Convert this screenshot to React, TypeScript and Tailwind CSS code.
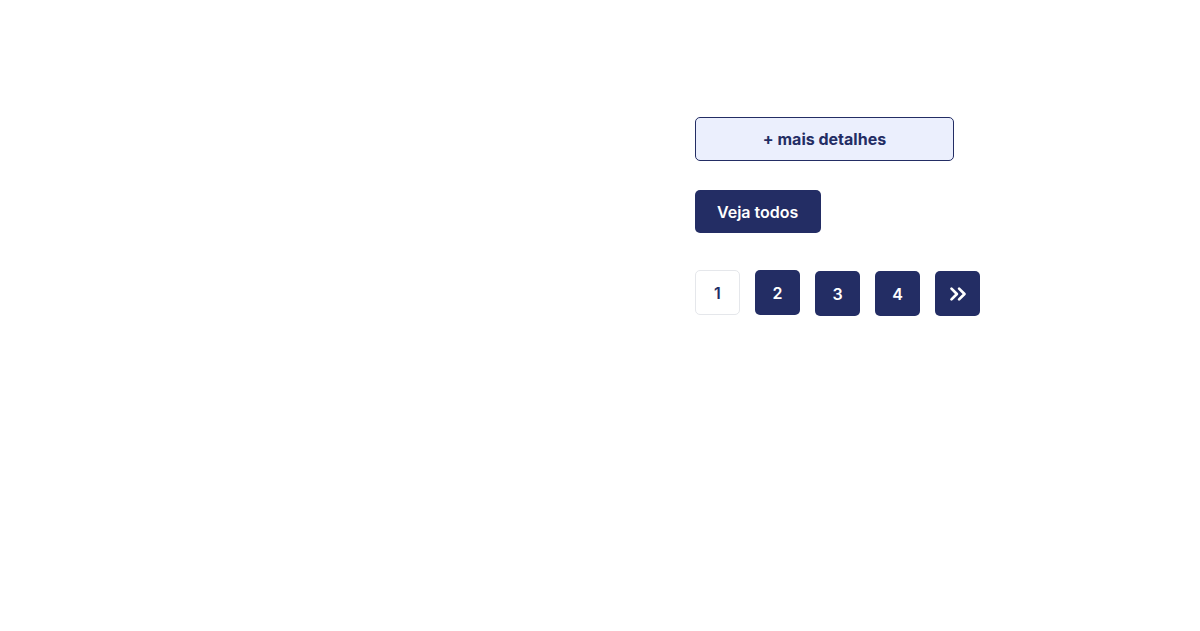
import { ChevronsRight } from "lucide-react";

const App = () => {
  return (
    <div className="min-h-screen bg-white font-['Inter',sans-serif]">
      <div className="pl-[695px] pt-[117px] flex flex-col items-start">
        {/* Detalhes */}
        <button className="w-[259px] h-[44px] rounded-[5px] border border-[#232d64] bg-[#ebeffd] text-[#232d64] text-base font-bold">
          + mais detalhes
        </button>

        {/* Veja todos */}
        <button className="mt-[29px] h-[43px] pl-[22px] pr-[23px] rounded-[5px] bg-[#232d64] text-white text-base font-semibold">
          Veja todos
        </button>

        {/* Paginação */}
        <div className="mt-[37px] flex items-start gap-[15px]">
          <button className="w-[45px] h-[45px] rounded-[5px] border border-[#e5e7eb] bg-white text-[#232d64] text-base font-semibold">
            1
          </button>
          <button className="w-[45px] h-[45px] rounded-[5px] bg-[#232d64] text-white text-base font-semibold">
            2
          </button>
          <button className="mt-px w-[45px] h-[45px] rounded-[5px] bg-[#232d64] text-white text-base font-semibold">
            3
          </button>
          <button className="mt-px w-[45px] h-[45px] rounded-[5px] bg-[#232d64] text-white text-base font-semibold">
            4
          </button>
          <button className="mt-px w-[45px] h-[45px] rounded-[5px] bg-[#232d64] text-white flex items-center justify-center">
            <ChevronsRight size={26} strokeWidth={2.5} />
          </button>
        </div>
      </div>
    </div>
  );
};

export default App;
